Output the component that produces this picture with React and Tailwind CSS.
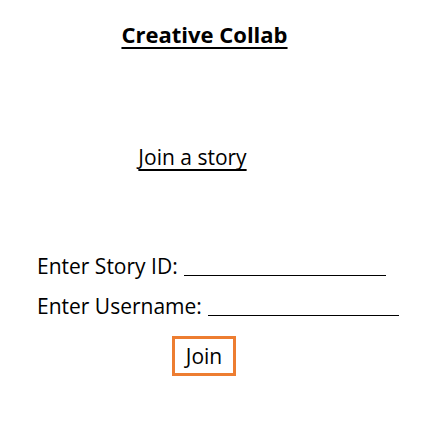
const font = { fontFamily: '"Open Sans", "Noto Sans", sans-serif' };

export default function App() {
  return (
    <div className="w-[427px] h-[435px] bg-white text-black" style={font}>
      <div className="flex flex-col items-center pr-[18px] pt-[18px]">
        <h1 className="text-[22px] leading-[32px] font-bold underline decoration-2 underline-offset-[4px]">
          Creative Collab
        </h1>
      </div>
      <div className="mt-[92px] flex justify-center pr-[42px]">
        <h2 className="text-[21px] leading-[30px] underline decoration-[1.5px] underline-offset-[4px] [text-decoration-skip-ink:none]">
          Join a story
        </h2>
      </div>
      <div className="mt-[80px] pl-[37px] flex flex-col gap-[12px] text-[21px] leading-[28px]">
        <div className="flex items-end">
          <span>Enter Story ID:</span>
          <span className="ml-[6px] mb-[4px] w-[202px] border-b-[1.5px] border-black" />
        </div>
        <div className="flex items-end">
          <span>Enter Username:</span>
          <span className="ml-[6px] mb-[4px] w-[191px] border-b-[1.5px] border-black" />
        </div>
      </div>
      <div className="mt-[16px] flex justify-center pr-[19px]">
        <button className="w-[64px] h-[40px] border-[3px] border-[#ED7D31] text-[21px] leading-none flex items-center justify-center">
          Join
        </button>
      </div>
    </div>
  );
}
